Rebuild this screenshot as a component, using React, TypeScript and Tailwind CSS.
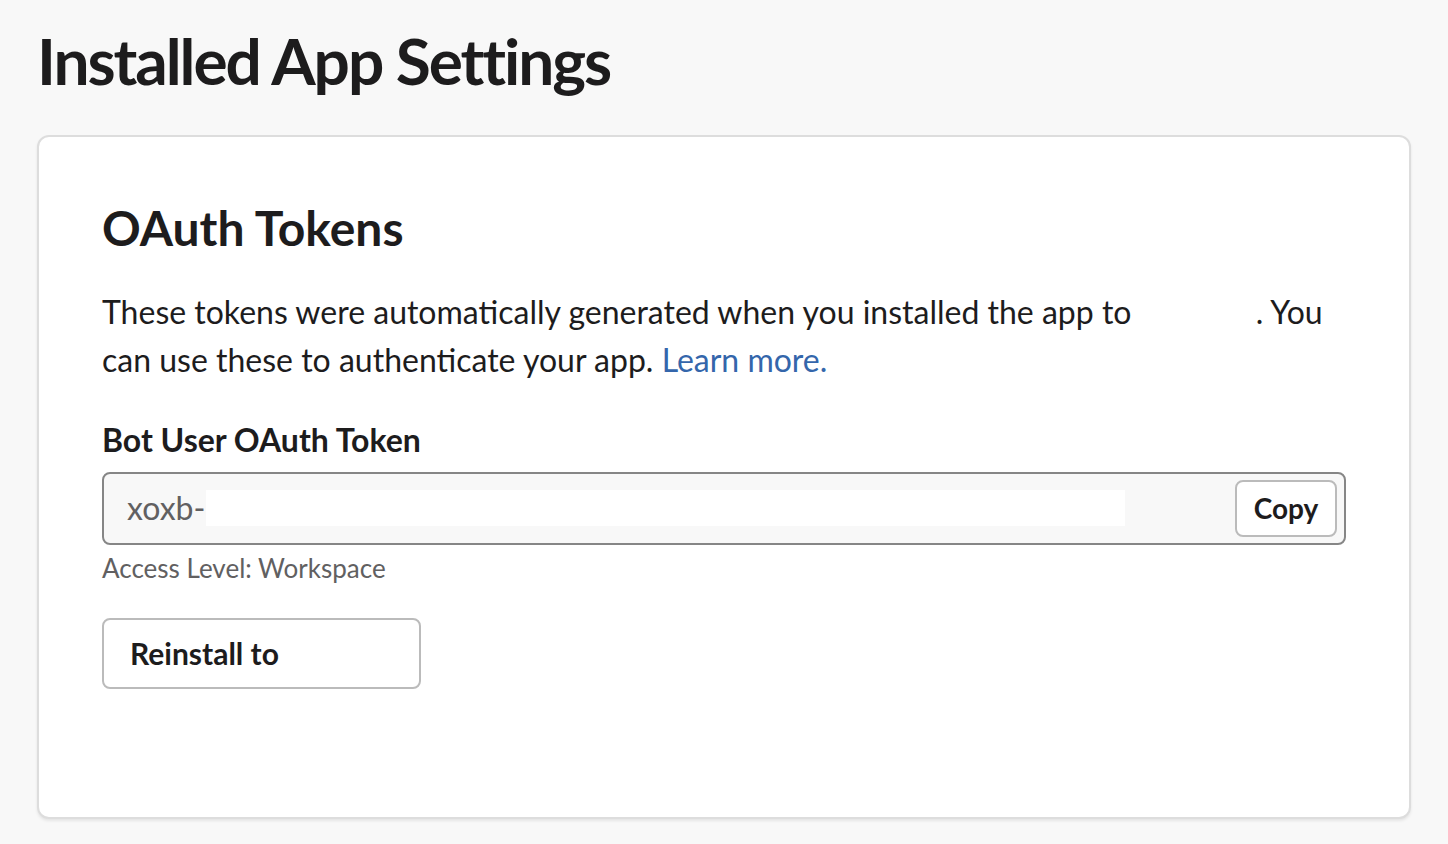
export default function App() {
  return (
    <div
      className="min-h-screen w-full bg-[#f8f8f8] text-[#1d1c1d]"
      style={{ fontFamily: "Lato, 'Noto Sans', sans-serif" }}
    >
      <div className="px-[37px] pt-[23px] pb-[26px]">
        <h1 className="text-[64px] font-bold leading-[1.2] tracking-[-0.032em]">
          Installed App Settings
        </h1>
        <div className="mt-[35px] rounded-[12px] border-2 border-[#dddddd] bg-white pl-[63px] pr-[63px] pt-[62px] pb-[128px] shadow-[0_2px_3px_rgba(0,0,0,0.08)]">
          <h2 className="text-[48px] font-bold leading-[1.2]">OAuth Tokens</h2>
          <p className="mt-[32px] text-[32px] leading-[48px]">
            These tokens were automatically generated when you installed the app to{" "}
            <span className="inline-block w-[116px]"></span>. You can use these to authenticate your app.{" "}
            <a className="text-[#3466ab]">Learn more.</a>
          </p>
          <div className="mt-[37px] text-[32px] font-bold leading-[1.2]">Bot User OAuth Token</div>
          <div className="mt-[12px] flex h-[73px] w-[1244px] items-center rounded-[8px] border-2 border-[#868686] bg-[#f8f8f8] pl-[23px] pr-[7px]">
            <span className="text-[32px] text-[#616061]">xoxb-</span>
            <span className="ml-[1px] inline-block h-[36px] w-[919px] bg-white"></span>
            <div className="flex-1"></div>
            <button className="flex h-[57px] w-[102px] items-center justify-center rounded-[8px] border-2 border-[#bbbbbb] bg-white text-[28px] font-bold text-[#1d1c1d]">
              Copy
            </button>
          </div>
          <div className="mt-[8px] text-[26px] leading-[1.2] text-[#616061]">Access Level: Workspace</div>
          <button className="mt-[34px] flex h-[71px] w-[319px] items-center rounded-[8px] border-2 border-[#bbbbbb] bg-white pl-[26px] text-[30px] font-bold text-[#1d1c1d]">
            Reinstall to
          </button>
        </div>
      </div>
    </div>
  );
}
